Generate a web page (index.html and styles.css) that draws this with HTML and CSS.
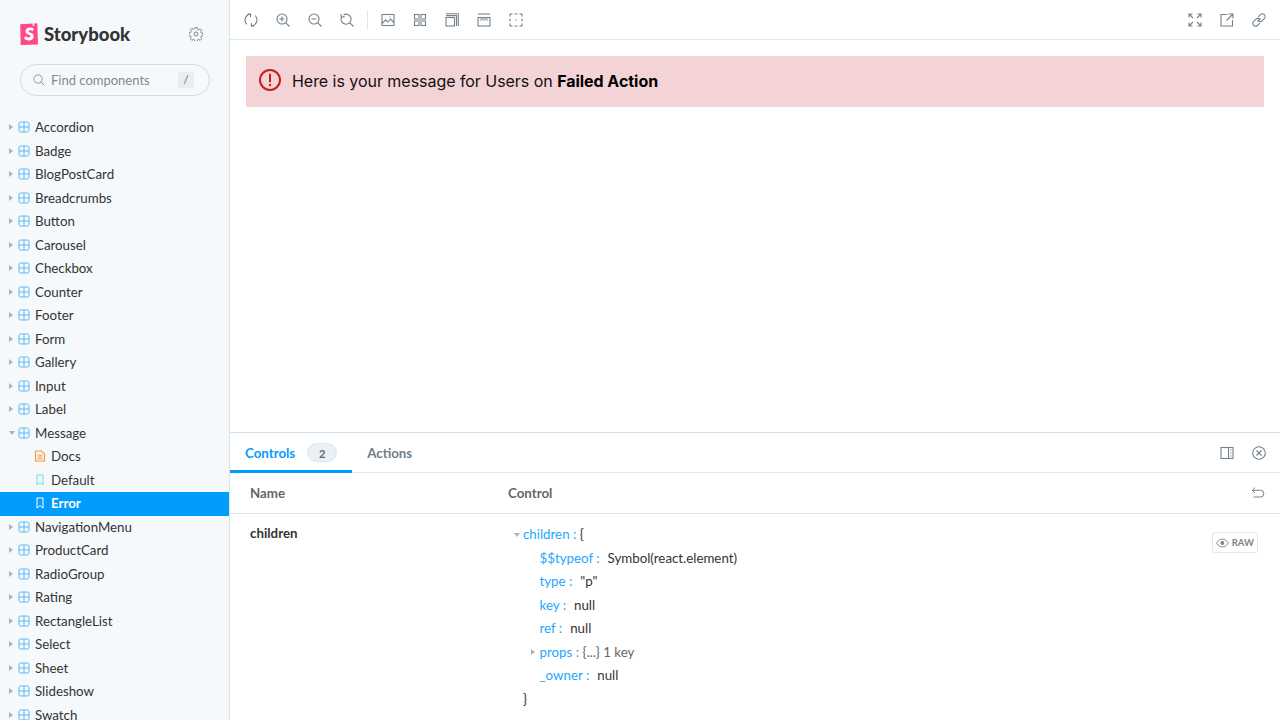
FILE: index.html
```html
<!DOCTYPE html>
<html lang="en">
<head>
<meta charset="utf-8">
<title>Storybook</title>
<link rel="stylesheet" href="styles.css">
</head>
<body>
<svg class="defs" width="0" height="0" aria-hidden="true">
  <symbol id="comp" viewBox="0 0 12 12"><rect x="1" y="1" width="10" height="10" rx="1.6" fill="none" stroke="currentColor"/><path d="M6 1v10M1 6h10" stroke="currentColor" fill="none"/></symbol>
  <symbol id="mark" viewBox="0 0 12 12"><path d="M3 1h6v10L6 8.600 3 11z" fill="none" stroke="currentColor"/></symbol>
  <symbol id="doc" viewBox="0 0 12 12"><path d="M1.500 1h6l3 3v7h-9z" fill="none" stroke="currentColor" stroke-width="1.200"/><path d="M3.500 5.200h5M3.500 7h5M3.500 8.800h5" stroke="currentColor" stroke-width="1"/></symbol>
</svg>
<div class="app">
  <aside class="sidebar">
    <div class="brand">
      <div class="logo">
        <svg class="logo-mark" width="18" height="22" viewBox="0 0 18 22"><path d="M0.200 1.200 12.800.6l-.1 2.300 1.500-.2.100-2.200L17.300.3l.7 21.200-17.300.5z" fill="#ff4785"/><path d="M13.800 5.600c-.7-.5-2.100-1.100-3.800-1.100-2.700 0-4.500 1.500-4.500 3.700 0 4 5.100 3 5.100 5 0 .8-.7 1.200-1.700 1.200-1.300 0-2.800-.6-3.800-1.400l-.9 3.100c1.100.8 2.800 1.300 4.700 1.300 2.800 0 4.800-1.500 4.800-4 0-4.200-5.100-3.300-5.100-5.100 0-.7.600-1 1.400-1 1.100 0 2.100.4 2.900.9z" fill="#fff"/></svg>
        <span class="logo-text">Storybook</span>
      </div>
      <svg class="gear" width="14" height="14" viewBox="0 0 14 14"><circle cx="7" cy="7" r="2" fill="none" stroke="currentColor" stroke-width=".9"/><path d="M5.900.6h2.200l.4 1.700 1.200.5 1.500-.9 1.500 1.500-.9 1.500.5 1.200 1.700.4v2.200l-1.700.4-.5 1.200.9 1.500-1.500 1.500-1.500-.9-1.200.5-.4 1.700H5.900l-.4-1.700-1.200-.5-1.500.9-1.500-1.500.9-1.500-.5-1.200-1.700-.4V5.900l1.700-.4.5-1.200-.9-1.500 1.500-1.500 1.500.9 1.200-.5z" fill="none" stroke="currentColor" stroke-width=".9" stroke-linejoin="round"/></svg>
    </div>
    <div class="search">
      <svg class="search-icon" width="12" height="12" viewBox="0 0 12 12"><circle cx="5" cy="5" r="4.200" fill="none" stroke="currentColor"/><path d="M8 8l3.500 3.500" stroke="currentColor"/></svg>
      <span class="search-text">Find components</span>
      <span class="kbd">/</span>
    </div>
    <nav class="tree">
      <div class="row"><i class="caret"></i><svg class="ic blue"><use href="#comp"/></svg>Accordion</div>
      <div class="row"><i class="caret"></i><svg class="ic blue"><use href="#comp"/></svg>Badge</div>
      <div class="row"><i class="caret"></i><svg class="ic blue"><use href="#comp"/></svg>BlogPostCard</div>
      <div class="row"><i class="caret"></i><svg class="ic blue"><use href="#comp"/></svg>Breadcrumbs</div>
      <div class="row"><i class="caret"></i><svg class="ic blue"><use href="#comp"/></svg>Button</div>
      <div class="row"><i class="caret"></i><svg class="ic blue"><use href="#comp"/></svg>Carousel</div>
      <div class="row"><i class="caret"></i><svg class="ic blue"><use href="#comp"/></svg>Checkbox</div>
      <div class="row"><i class="caret"></i><svg class="ic blue"><use href="#comp"/></svg>Counter</div>
      <div class="row"><i class="caret"></i><svg class="ic blue"><use href="#comp"/></svg>Footer</div>
      <div class="row"><i class="caret"></i><svg class="ic blue"><use href="#comp"/></svg>Form</div>
      <div class="row"><i class="caret"></i><svg class="ic blue"><use href="#comp"/></svg>Gallery</div>
      <div class="row"><i class="caret"></i><svg class="ic blue"><use href="#comp"/></svg>Input</div>
      <div class="row"><i class="caret"></i><svg class="ic blue"><use href="#comp"/></svg>Label</div>
      <div class="row"><i class="caret open"></i><svg class="ic blue"><use href="#comp"/></svg>Message</div>
      <div class="row child"><svg class="ic orange"><use href="#doc"/></svg>Docs</div>
      <div class="row child"><svg class="ic teal"><use href="#mark"/></svg>Default</div>
      <div class="row child active"><svg class="ic white"><use href="#mark"/></svg>Error</div>
      <div class="row"><i class="caret"></i><svg class="ic blue"><use href="#comp"/></svg>NavigationMenu</div>
      <div class="row"><i class="caret"></i><svg class="ic blue"><use href="#comp"/></svg>ProductCard</div>
      <div class="row"><i class="caret"></i><svg class="ic blue"><use href="#comp"/></svg>RadioGroup</div>
      <div class="row"><i class="caret"></i><svg class="ic blue"><use href="#comp"/></svg>Rating</div>
      <div class="row"><i class="caret"></i><svg class="ic blue"><use href="#comp"/></svg>RectangleList</div>
      <div class="row"><i class="caret"></i><svg class="ic blue"><use href="#comp"/></svg>Select</div>
      <div class="row"><i class="caret"></i><svg class="ic blue"><use href="#comp"/></svg>Sheet</div>
      <div class="row"><i class="caret"></i><svg class="ic blue"><use href="#comp"/></svg>Slideshow</div>
      <div class="row"><i class="caret"></i><svg class="ic blue"><use href="#comp"/></svg>Swatch</div>
    </nav>
  </aside>
  <main class="main">
    <header class="toolbar">
      <div class="tools">
        <span class="tool"><svg viewBox="0 0 14 14"><path d="M2.800 11.300A6 6 0 0 1 6.500 1.100M3.600 1h3v3M11.200 2.700A6 6 0 0 1 7.500 12.900M10.400 13h-3v-3"/></svg></span>
        <span class="tool"><svg viewBox="0 0 14 14"><circle cx="6" cy="6" r="5"/><path d="M9.600 9.600 13.500 13.500M6 3.500v5M3.500 6h5"/></svg></span>
        <span class="tool"><svg viewBox="0 0 14 14"><circle cx="6" cy="6" r="5"/><path d="M9.600 9.600 13.500 13.500M3.500 6h5"/></svg></span>
        <span class="tool"><svg viewBox="0 0 14 14"><path d="M3.500 1.900A5 5 0 1 1 1.300 4.700M9.600 9.600 13.500 13.500M.8 1l.6 3.300 3.200-.7"/></svg></span>
        <span class="sep"></span>
        <span class="tool"><svg viewBox="0 0 14 14"><rect x="1" y="1.500" width="12" height="11"/><path d="M1 10.500l3.500-3.500 2.500 2 2.500-3 3.500 3.500M8.500 4h1"/></svg></span>
        <span class="tool"><svg viewBox="0 0 14 14"><rect x="1.500" y="1.500" width="4.500" height="4.500"/><rect x="8" y="1.500" width="4.500" height="4.500"/><rect x="1.500" y="8" width="4.500" height="4.500"/><rect x="8" y="8" width="4.500" height="4.500"/><path class="shade" d="M4 5.500h1.500V4h3v1.500H10v3H8.500V10h-3V8.500H4z"/></svg></span>
        <span class="tool"><svg viewBox="0 0 14 14"><rect x="1" y="4.500" width="8.500" height="8.500"/><path d="M1 2.600h10.500V13M1 .7h12.300V13"/></svg></span>
        <span class="tool"><svg viewBox="0 0 14 14"><path d="M1 1h12"/><rect x="1" y="4.500" width="12" height="8.500"/><path class="shade-line" d="M4 4.500v3.500M5.500 4.500v2.500M7 4.500v3.500M8.500 4.500v2.500M10 4.500v3.500"/></svg></span>
        <span class="tool"><svg viewBox="0 0 14 14"><path d="M1 3.500V1h2.500M5.500 1h3M10.500 1H13v2.500M13 5.500v3M13 10.500V13h-2.500M8.500 13h-3M3.500 13H1v-2.500M1 8.500v-3M6.300 7h1.400"/></svg></span>
      </div>
      <div class="tools">
        <span class="tool"><svg viewBox="0 0 14 14"><path d="M1.500 1.500 5 5M9 9l3.500 3.500M12.500 1.500 9 5M5 9l-3.500 3.500M1 4.500V1h3.500M9.500 1H13v3.500M13 9.500V13H9.500M4.500 13H1V9.500"/></svg></span>
        <span class="tool"><svg viewBox="0 0 14 14"><path d="M7 1.500H1v11.500h11.500V7M6.500 7.500 13 1M8.500 1H13v4.500"/></svg></span>
        <span class="tool"><svg viewBox="0 0 14 14"><path d="M5.500 8.500 8.500 5.500M6.200 3.900 8.400 1.700a2.500 2.500 0 0 1 3.900 3.900L10.100 7.800a2.500 2.500 0 0 1-3.500 0M7.800 10.100 5.600 12.300a2.500 2.500 0 0 1-3.900-3.900L3.900 6.200a2.500 2.500 0 0 1 3.500 0"/></svg></span>
      </div>
    </header>
    <section class="preview">
      <div class="message">
        <svg class="msg-icon" width="24" height="24" viewBox="0 0 24 24"><circle cx="12" cy="12" r="10" fill="none" stroke="#c81e1e" stroke-width="2"/><path d="M12 6.500v7" stroke="#c81e1e" stroke-width="2" stroke-linecap="round"/><circle cx="12" cy="17" r="1.200" fill="#c81e1e"/></svg>
        <p class="msg-text">Here is your message for Users on <b>Failed Action</b></p>
      </div>
    </section>
    <section class="panel">
      <div class="tabs">
        <div class="tablist">
          <div class="tab active">Controls<span class="pill">2</span></div>
          <div class="tab">Actions</div>
        </div>
        <div class="tab-tools">
          <span class="tool"><svg viewBox="0 0 14 14"><rect x="1" y="1.500" width="12" height="11"/><path d="M8.500 1.500v11M10.200 4h1.300M10.200 7h1.300M10.200 10h1.300"/></svg></span>
          <span class="tool"><svg viewBox="0 0 14 14"><circle cx="7" cy="7" r="6.300"/><path d="M4.500 4.500l5 5M9.500 4.500l-5 5"/></svg></span>
        </div>
      </div>
      <div class="thead">
        <div class="col-name">Name</div>
        <div class="col-control">Control</div>
        <svg class="undo" viewBox="0 0 14 14"><path d="M4 1.500 1.200 4.300 4 7M1.200 4.300h8.300a3.300 3.300 0 0 1 0 6.700H2.500"/></svg>
      </div>
      <div class="tbody">
        <div class="col-name strong">children</div>
        <div class="json">
          <div class="jline top"><i class="caret open"></i><span class="k">children :</span>&nbsp;{</div>
          <div class="jline in"><span class="k">$$typeof :</span><span class="v">Symbol(react.element)</span></div>
          <div class="jline in"><span class="k">type :</span><span class="v">"p"</span></div>
          <div class="jline in"><span class="k">key :</span><span class="v">null</span></div>
          <div class="jline in"><span class="k">ref :</span><span class="v">null</span></div>
          <div class="jline in"><i class="caret small"></i><span class="k">props :</span>&nbsp;<span class="muted">{...} 1 key</span></div>
          <div class="jline in"><span class="k">_owner :</span><span class="v">null</span></div>
          <div class="jline top">}</div>
        </div>
        <div class="raw"><svg width="14" height="10" viewBox="0 0 14 10"><path d="M.5 5C2.500 1.800 4.700.8 7 .8s4.500 1 6.500 4.200C11.500 8.200 9.300 9.200 7 9.200S2.500 8.200.5 5z" fill="none" stroke="currentColor"/><circle cx="7" cy="5" r="2.200" fill="currentColor"/></svg>RAW</div>
      </div>
    </section>
  </main>
</div>
</body>
</html>
```
FILE: styles.css
```css
* { box-sizing: border-box; }
html, body { margin: 0; height: 100%; overflow: hidden; background: #fff; }
body { font-family: "Lato", "Noto Sans", sans-serif; font-size: 13px; color: #333; }
.defs { position: absolute; }
.app { display: flex; width: 1280px; height: 720px; }

.sidebar { flex: 0 0 230px; height: 720px; overflow: hidden; background: #f6f9fc; border-right: 1px solid #dbe3ea; }
.brand { display: flex; align-items: center; justify-content: space-between; height: 22px; margin: 23px 26px 0 20px; }
.logo { display: flex; align-items: center; gap: 6px; }
.logo-text { font-size: 18.5px; font-weight: 900; color: #333; }
.gear { color: #6f7c87; }
.search { display: flex; align-items: center; width: 190px; height: 32px; margin: 19px 0 0 20px; padding: 0 15px 0 12px; border: 1px solid #d3dce3; border-radius: 16px; }
.search-icon { color: #8b98a3; flex: none; }
.search-text { margin-left: 6px; flex: 1; color: #7d8a95; font-size: 13px; }
.kbd { width: 16px; height: 16px; line-height: 16px; text-align: center; border-radius: 2px; background: #e9edf0; color: #5c6870; font-size: 11px; }

.tree { margin-top: 20px; }
.row { display: flex; align-items: center; height: 23.5px; padding-left: 9px; padding-bottom: 1px; font-size: 13.3px; color: #333; white-space: nowrap; }
.row.child { padding-left: 34px; }
.row.active { background: #029cfd; color: #fff; font-weight: 700; }
.caret { flex: none; width: 0; height: 0; border-left: 4px solid #a9b3ba; border-top: 3px solid transparent; border-bottom: 3px solid transparent; margin: 0 5px 0 0; }
.caret.open { border-left: 3px solid transparent; border-right: 3px solid transparent; border-top: 4px solid #a9b3ba; border-bottom: 0; margin-right: 3px; }
.ic { flex: none; width: 12px; height: 12px; margin-right: 5px; }
.blue { color: #5ab8f5; }
.orange { color: #f29a3c; }
.teal { color: #6fdde0; }
.white { color: #fff; }

.main { flex: 1; min-width: 0; display: flex; flex-direction: column; }
.toolbar { flex: 0 0 40px; display: flex; justify-content: space-between; align-items: center; padding: 0 5px; border-bottom: 1px solid #e3e6e8; }
.tools, .tab-tools { display: flex; align-items: center; }
.tool { display: flex; align-items: center; justify-content: center; width: 32px; height: 28px; }
.tool svg { width: 14px; height: 14px; fill: none; stroke: #73828c; stroke-width: 1.1; }
.tool svg .shade { fill: #b9c2c8; stroke: none; }
.tool svg .shade-line { stroke: #9aa5ad; }
.sep { width: 1px; height: 20px; margin: 0 4px; background: #e3e6e8; }

.preview { flex: 1; padding: 16px; min-height: 0; }
.message { display: flex; align-items: center; gap: 10px; height: 51px; padding: 0 12px 2px; background: #f4d3d6; }
.msg-icon { margin-bottom: 1px; }
.msg-text { margin: 0; font-family: "Inter", sans-serif; font-size: 16px; letter-spacing: -0.04px; color: #111; }
.msg-text b { font-weight: 700; color: #000; }

.panel { flex: 0 0 288px; border-top: 1px solid #d6e0e8; overflow: hidden; }
.tabs { display: flex; justify-content: space-between; align-items: center; height: 40px; border-bottom: 1px solid #e3e6e8; padding-right: 5px; }
.tablist { display: flex; height: 40px; }
.tab { display: flex; align-items: center; padding: 0 15px; font-weight: 700; font-size: 13.3px; color: #6f7c87; }
.tab.active { color: #029cfd; border-bottom: 3px solid #029cfd; padding-top: 3px; }
.pill { margin-left: 12px; width: 30px; height: 19px; line-height: 19px; border-radius: 10px; text-align: center; background: #e9f0f6; border: 1px solid #dee7ee; color: #5c6870; font-size: 11px; }

.thead { display: flex; align-items: center; height: 41px; padding: 0 15px 1px 20px; border-bottom: 1px solid #e3e6e8; font-weight: 700; color: #666; font-size: 13.3px; }
.col-name { flex: 0 0 258px; }
.col-control { flex: 1; }
.undo { width: 14px; height: 14px; fill: none; stroke: #73828c; stroke-width: 1; }
.tbody { display: flex; align-items: flex-start; padding: 9px 22px 0 20px; }
.strong { font-weight: 700; color: #333; font-size: 13.3px; padding-top: 2px; }
.json { flex: 1; }
.jline { display: flex; align-items: center; height: 23.5px; padding-bottom: 1px; white-space: nowrap; font-size: 13.3px; color: #333; position: relative; }
.jline.top { padding-left: 15px; }
.jline.in { padding-left: 31.5px; }
.jline .caret { position: absolute; }
.jline.top .caret { left: 6px; top: 10px; }
.jline .caret.small { left: 23px; top: 8px; }
.k { color: #1ea7fd; }
.v { margin-left: 8px; }
.muted { color: #666; }
.raw { display: flex; align-items: center; gap: 3px; width: 46px; height: 21px; margin-top: 9px; padding: 0 3px; border: 1px solid #e3e6e8; border-radius: 3px; color: #7a858e; font-size: 9.5px; font-weight: 700; }
```
